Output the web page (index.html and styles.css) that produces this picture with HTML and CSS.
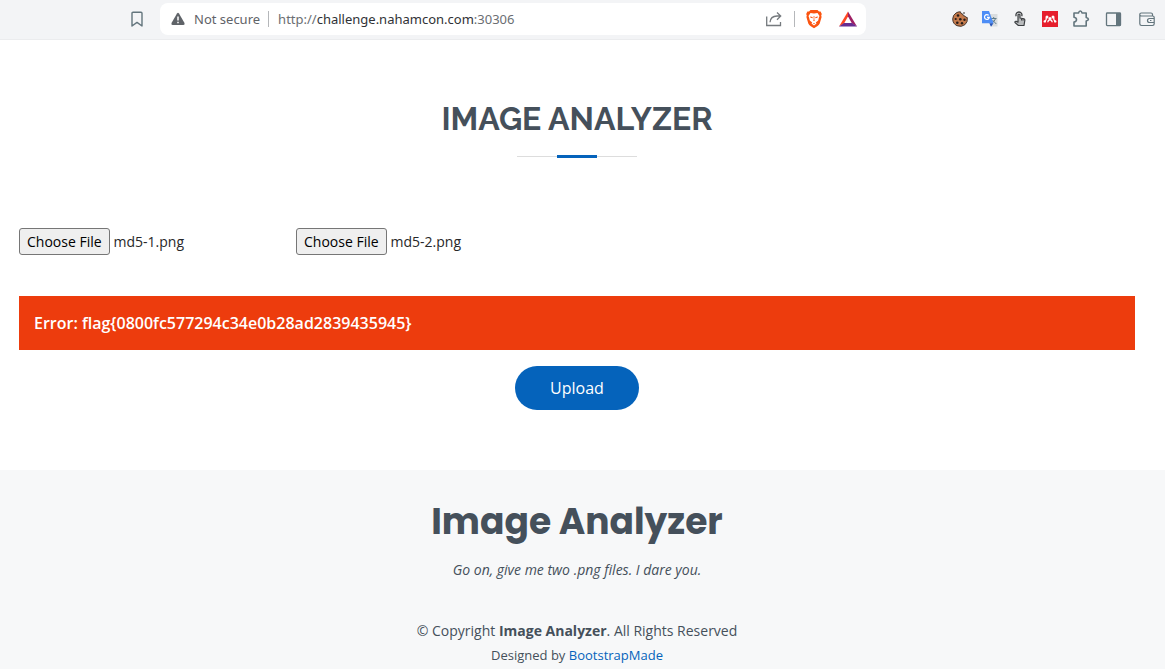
FILE: index.html
```html
<!DOCTYPE html>
<html lang="en">
<head>
<meta charset="utf-8">
<meta name="viewport" content="width=device-width, initial-scale=1">
<title>Image Analyzer</title>
<link rel="stylesheet" href="styles.css">
</head>
<body>
<header class="toolbar">
  <button class="icon-button" type="button" aria-label="Bookmark this page">
    <svg width="18" height="18" viewBox="0 0 18 18" fill="none" stroke="#63757d" stroke-width="1.4" stroke-linejoin="round"><path d="M4 3.2Q4 2.2 5 2.2H13Q14 2.2 14 3.2V16L9 12.4L4 16Z"/></svg>
  </button>
  <div class="address">
    <button class="security" type="button">
      <svg width="16" height="16" viewBox="0 0 16 16"><path d="M7 2.6Q8 1 9 2.6L14.5 12Q15.1 14 13.4 14H2.6Q.9 14 1.5 12Z" fill="#5f6368"/><path d="M8 5.5V9.5M8 10.8V12.3" stroke="#fff" stroke-width="1.5"/></svg>
      <span>Not secure</span>
    </button>
    <span class="divider"></span>
    <div class="url" role="textbox" aria-label="Address" contenteditable="true" spellcheck="false">http://<span class="host">challenge.nahamcon.com</span>:30306</div>
    <button class="icon-button" type="button" aria-label="Share">
      <svg width="18" height="18" viewBox="0 0 18 18" fill="none" stroke="#757a7e" stroke-width="1.3"><path d="M1.7 6.5V15.5H15.5V12M5 12.3Q5.5 6.2 12 6H15.5M12 2.5L15.7 6L12 9.7"/></svg>
    </button>
    <span class="divider divider-actions"></span>
    <button class="icon-button" type="button" aria-label="Brave Shields">
      <svg width="18" height="20" viewBox="0 0 18 20"><path d="M5.5 1H12.5L14 2.6L15.6 2.6L16.8 5L16.2 6.5L16.6 8L14.7 14.6Q14 16.2 12.2 17.2L9 19.2L5.8 17.2Q4 16.2 3.3 14.6L1.4 8L1.8 6.5L1.2 5L2.4 2.6L4 2.6Z" fill="#fb5410"/><path d="M5.5 4L9 4.6L12.5 4L14.5 7L13.9 8.5L13.2 11.5L10.8 13.4L11.5 14.5L9 16.4L6.5 14.5L7.2 13.4L4.8 11.5L4.1 8.5L3.5 7Z" fill="#fff"/><path d="M5 7.4L7.5 8L7.8 9.2L5.6 8.7ZM13 7.4L10.5 8L10.2 9.2L12.4 8.7ZM8.6 7L9.4 7L9.3 10.5L9.8 11.5L9 12.2L8.2 11.5L8.7 10.5ZM7.7 14H10.3L9 15Z" fill="#fb5410"/></svg>
    </button>
    <button class="icon-button" type="button" aria-label="Brave Rewards">
      <svg width="18" height="18" viewBox="0 0 18 18"><path d="M9 1.5L0 16.5L5 13.4L9 6.6Z" fill="#ff4724"/><path d="M9 1.5L18 16.5L13 13.4L9 6.6Z" fill="#9e1f63"/><path d="M0 16.5L5 13H13L18 16.5Z" fill="#662d91"/></svg>
    </button>
  </div>
  <div class="extensions">
    <button class="icon-button" type="button" aria-label="Cookie editor">
      <svg width="16" height="16" viewBox="0 0 16 16"><path d="M8.4.8Q8.5 3 10.6 3Q11 5.4 13 5.1Q13.4 6.4 15.3 6.6Q16 11 13 13.6Q9.5 16.5 5 14.7Q.8 12.8.7 8Q.8 4 4 2Q6 .7 8.4.8Z" fill="#c47a4c" stroke="#3a2a22" stroke-width=".9"/><g fill="#271c19"><circle cx="6" cy="4.5" r="1.3"/><circle cx="3.7" cy="8" r="1.1"/><circle cx="8.3" cy="8.3" r="1.3"/><circle cx="5.3" cy="11.8" r="1.3"/><circle cx="10" cy="12.2" r="1.2"/><circle cx="12.5" cy="8.8" r="1.2"/><circle cx="12" cy="2" r=".8"/></g></svg>
    </button>
    <button class="icon-button" type="button" aria-label="Translate">
      <svg width="16" height="16" viewBox="0 0 16 16"><path d="M6 3H15.5V15.5H9Z" fill="#dadddf"/><path d="M9 7.5H14.5M11.7 6V7.5M13.5 7.7Q12.7 10.5 9.8 12M10.5 9L14.3 13" fill="none" stroke="#607d8b" stroke-width="1"/><path d="M0 0H7L11.5 12.3H0Z" fill="#4d8df6"/><path d="M7.3 12.3H11.5L9 15.8Z" fill="#2856b8"/><path d="M6.7 4.4A2.4 2.4 0 1 0 7.3 6.4H5" fill="none" stroke="#fff" stroke-width="1.2"/></svg>
    </button>
    <button class="icon-button" type="button" aria-label="Click helper">
      <svg width="16" height="16" viewBox="0 0 16 16"><path d="M4.2 5.2A3 3 0 1 1 9.7 5.2" fill="none" stroke="#3c3f42" stroke-width="1.3"/><path d="M6 8.8V3.6Q7 2.5 8 3.6V7L12 7.8Q13 8.2 12.8 9.5L12 14.5H6.4L3 11.6Q2.8 10 4.3 10.3L6 11.2Z" fill="#b9bbbd" stroke="#3c3f42" stroke-width="1.2" stroke-linejoin="round"/><path d="M9.5 8V9.5M11 8.2V9.7M6.5 14.5H12" stroke="#3c3f42" stroke-width="1"/></svg>
    </button>
    <button class="icon-button" type="button" aria-label="Mendeley">
      <svg width="16" height="16" viewBox="0 0 16 16"><path d="M0 0H16V16H0Z" fill="#e61e2d"/><g fill="#fff"><circle cx="5" cy="5.9" r="1.5"/><circle cx="11" cy="5.9" r="1.5"/><circle cx="8" cy="7.6" r="1.5"/><circle cx="2.8" cy="10.4" r="1.2"/><circle cx="13.2" cy="10.4" r="1.2"/></g><path d="M4.3 6.5Q4.6 9 2.8 10.4M11.7 6.5Q11.4 9 13.2 10.4M5.8 11.2Q6 8.9 8 8.9Q10 8.9 10.2 11.2" fill="none" stroke="#fff" stroke-width="1.3"/></svg>
    </button>
  </div>
  <div class="browser-actions">
    <button class="icon-button" type="button" aria-label="Extensions">
      <svg width="18" height="18" viewBox="0 0 18 18"><path d="M2 3H6.5Q7 1 8.3 1Q9.7 1 10 3H14.2V7.5Q16.4 8 16.4 9.3Q16.4 10.6 14.2 11V16H2V12Q4.5 11.5 4.5 9.7Q4.5 7.8 2 7.3Z" fill="none" stroke="#63757d" stroke-width="1.6" stroke-linejoin="round"/></svg>
    </button>
    <button class="icon-button" type="button" aria-label="Sidebar">
      <svg width="18" height="18" viewBox="0 0 18 18"><rect x="1.5" y="3" width="14" height="12.6" rx=".8" fill="none" stroke="#63757d" stroke-width="1.3"/><path d="M11 3H15.8V15.6H11Z" fill="#63757d"/></svg>
    </button>
    <button class="icon-button" type="button" aria-label="Wallet">
      <svg width="18" height="18" viewBox="0 0 18 18" fill="none" stroke="#63757d" stroke-width="1.2"><path d="M14.5 6V4.4Q14.4 3 13 3H3.4Q1.8 3 1.8 4.6V13.8Q1.8 15.5 3.5 15.5H14.5Q16.2 15.5 16.2 13.8V7.4Q16.2 6 14.7 6H3.5Q2 6 1.8 4.8M16.2 8.5H11.5Q9.5 8.6 9.5 10.5Q9.5 12.5 11.5 12.5H16.2M12 10.5H13.4"/></svg>
    </button>
  </div>
</header>

<main class="analyzer">
  <h1 class="title">Image Analyzer</h1>
  <form class="upload-form">
    <div class="files">
      <input class="file" type="file" accept="image/png" aria-label="First image" data-name="md5-1.png">
      <input class="file" type="file" accept="image/png" aria-label="Second image" data-name="md5-2.png">
    </div>
    <div class="error" role="alert">Error: flag{0800fc577294c34e0b28ad2839435945}</div>
    <button class="upload" type="button">Upload</button>
  </form>
</main>

<footer class="footer">
  <h2 class="footer-name">Image Analyzer</h2>
  <p class="tagline">Go on, give me two .png files. I dare you.</p>
  <p class="copyright">© Copyright <strong>Image Analyzer</strong>. All Rights Reserved</p>
  <p class="credits">Designed by <a class="credit-link" href="#">BootstrapMade</a></p>
</footer>
<script src="script.js"></script>
</body>
</html>
```
FILE: styles.css
```css
* { box-sizing: border-box; }

body {
  margin: 0;
  min-height: 100vh;
  display: flex;
  flex-direction: column;
  background: #fff;
  color: #444;
  font-family: "Open Sans", "Noto Sans", sans-serif;
  font-size: 14px;
}

button { font-family: inherit; border: 0; background: none; cursor: pointer; }

/* Browser bar */
.toolbar {
  display: flex;
  align-items: center;
  height: 40px;
  padding: 0 9px 2px 128px;
  background: #f3f4f6;
  border-bottom: 1px solid #ebecee;
  font-family: "Noto Sans", "Open Sans", sans-serif;
  font-size: 13px;
}
.icon-button { display: flex; flex: none; padding: 0; }
.address {
  display: flex;
  align-items: center;
  flex: 0 1 706px;
  min-width: 0;
  height: 32px;
  margin-left: 14px;
  padding: 0 9px 0 10px;
  border-radius: 8px;
  background: #fff;
  color: #6b6e72;
}
.security {
  display: flex;
  align-items: center;
  gap: 8px;
  flex: none;
  padding: 0;
  color: #5f6368;
  font-size: 13px;
  line-height: 20px;
}
.divider { flex: none; width: 1px; height: 16px; margin: 0 9px 0 8px; background: #b5b7ba; }
.divider-actions { margin: 0 10px 0 11px; }
.url { flex: 1; min-width: 0; overflow: hidden; white-space: nowrap; line-height: 20px; outline: 0; }
.host { color: #303236; }
.divider-actions + .icon-button { margin-right: 16px; }
.extensions { display: flex; align-items: center; gap: 14px; margin-left: auto; }
.browser-actions { display: flex; align-items: center; gap: 15px; margin-left: 14px; }

/* Upload section */
.analyzer { padding: 60px 30px 60px 19px; }
.title {
  margin: 0 0 70px;
  padding-bottom: 20px;
  background:
    linear-gradient(#0563bb, #0563bb) center bottom / 40px 3px no-repeat,
    linear-gradient(#fff, #fff) center bottom / 120px 1px no-repeat,
    linear-gradient(#ddd, #ddd) center bottom / 120px 2px no-repeat;
  color: #45505b;
  font-family: Raleway, Lato, sans-serif;
  font-size: 32px;
  font-weight: 700;
  line-height: 38px;
  text-align: center;
  text-transform: uppercase;
}
.upload-form { display: flex; flex-direction: column; }
.files { display: flex; flex-wrap: wrap; gap: 24px; }
.file { width: 253px; font-family: inherit; font-size: 14px; line-height: 21px; color: #272829; }
.file::file-selector-button {
  height: 27px;
  margin: 0 4px 0 0;
  padding: 1px 7px;
  border: 1px solid #767676;
  border-radius: 3px;
  background: #efefef;
  color: #000;
  font-family: inherit;
  font-size: 14px;
}
.error {
  margin: 41px 0 16px;
  padding: 15px;
  background: #ed3c0d;
  color: #fff;
  font-size: 16px;
  font-weight: 600;
  line-height: 24px;
}
.upload {
  align-self: center;
  padding: 10px 35px;
  border-radius: 50px;
  background: #0563bb;
  color: #fff;
  font-size: 16px;
  line-height: 24px;
}

/* Footer */
.footer {
  flex: 1;
  padding: 30px 30px 0 19px;
  background: #f7f8f9;
  color: #45505b;
  text-align: center;
}
.footer p { margin: 0; line-height: 21px; }
.footer-name {
  margin: 0 0 16px;
  font-family: Poppins, Inter, sans-serif;
  font-size: 36px;
  font-weight: 700;
  line-height: 43px;
}
.footer .tagline { margin-bottom: 40px; font-style: italic; }
.footer .credits { margin-top: 4px; font-size: 13px; }
.credit-link { color: #0563bb; text-decoration: none; }
```
FILE: script.js
```js
document.querySelectorAll(".file").forEach((input) => {
  const transfer = new DataTransfer();
  transfer.items.add(new File([""], input.dataset.name, { type: "image/png" }));
  input.files = transfer.files;
});
```
